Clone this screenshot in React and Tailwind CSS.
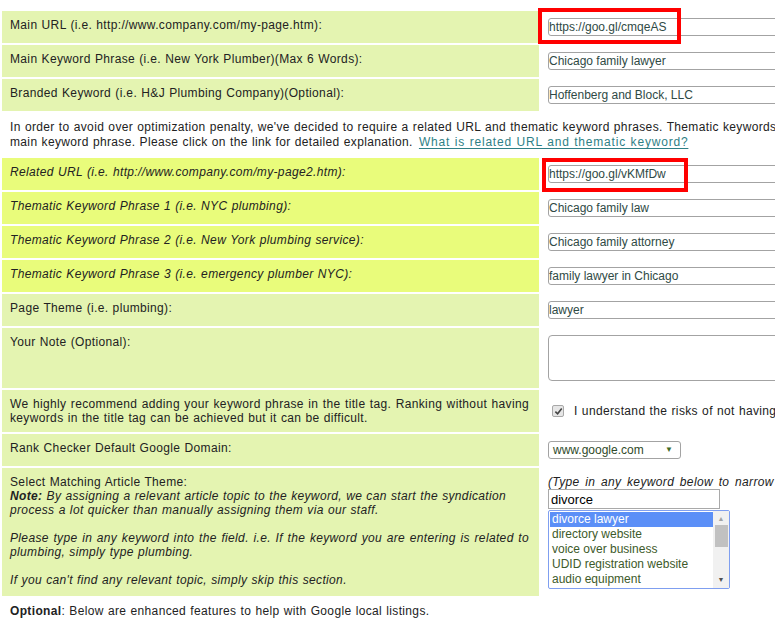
const label = "text-[12px] leading-[14px] tracking-[0.35px] [word-spacing:0.5px] text-[#222]"
const inputCls =
  "h-[18px] w-[262px] rounded-[3px] border border-[#a3a3a3] bg-white px-0 text-[12px] leading-[16px] text-[#2f4a45] outline-none"

function Row({ tone = "light", left, right, italic = false }) {
  const bg = tone === "yellow" ? "bg-[#e9fc7b]" : "bg-[#e4f4b1]"
  return (
    <div className="flex">
      <div className={`w-[537px] shrink-0 ${bg} pl-[8px] pr-[10px] py-[7px] ${label} ${italic ? "italic" : ""}`}>{left}</div>
      <div className="flex flex-1 items-center pl-[9px] py-[7px] text-[12px] leading-[14px]">{right}</div>
    </div>
  )
}

function TextInput({ value }) {
  return <input readOnly value={value} className={inputCls} />
}

const topics = [
  "divorce lawyer",
  "directory website",
  "voice over business",
  "UDID registration website",
  "audio equipment",
]

export default function App() {
  return (
    <div className="w-[775px] h-[619px] overflow-hidden bg-white font-['Liberation_Sans',Arial,sans-serif]">
      <div className="relative w-[840px] pl-[2px] pt-[11px] flex flex-col gap-[2px]">
        <Row left="Main URL (i.e. http://www.company.com/my-page.htm):" right={<TextInput value="https://goo.gl/cmqeAS" />} />
        <Row left="Main Keyword Phrase (i.e. New York Plumber)(Max 6 Words):" right={<TextInput value="Chicago family lawyer" />} />
        <Row left="Branded Keyword (i.e. H&J Plumbing Company)(Optional):" right={<TextInput value="Hoffenberg and Block, LLC" />} />

        <div className={`${label} pl-[8px] pt-[7px] pb-[6px] leading-[15px] whitespace-nowrap`}>
          <div>
            In order to avoid over optimization penalty, we've decided to require a related URL and thematic keyword phrases. Thematic keywords should be close to your
          </div>
          <div>
            main keyword phrase. Please click on the link for detailed explanation.{" "}
            <a className="ml-[2px] tracking-[0.8px] text-[#2f7f86] underline underline-offset-2">What is related URL and thematic keyword?</a>
          </div>
        </div>

        <Row tone="yellow" italic left="Related URL (i.e. http://www.company.com/my-page2.htm):" right={<TextInput value="https://goo.gl/vKMfDw" />} />
        <Row tone="yellow" italic left="Thematic Keyword Phrase 1 (i.e. NYC plumbing):" right={<TextInput value="Chicago family law" />} />
        <Row tone="yellow" italic left="Thematic Keyword Phrase 2 (i.e. New York plumbing service):" right={<TextInput value="Chicago family attorney" />} />
        <Row tone="yellow" italic left="Thematic Keyword Phrase 3 (i.e. emergency plumber NYC):" right={<TextInput value="family lawyer in Chicago" />} />
        <Row left="Page Theme (i.e. plumbing):" right={<TextInput value="lawyer" />} />
        <Row
          left="Your Note (Optional):"
          right={<textarea readOnly className="h-[46px] w-[262px] resize-none rounded-[4px] border border-[#a3a3a3] bg-white outline-none" />}
        />
        <Row
          left={
            <>
              <div className="text-justify [text-align-last:justify]">
                We highly recommend adding your keyword phrase in the title tag. Ranking without having
              </div>
              <div className="whitespace-nowrap">keywords in the title tag can be achieved but it can be difficult.</div>
            </>
          }
          right={
            <label className={`ml-[4px] flex items-center gap-[10px] ${label} tracking-[0.6px] whitespace-nowrap`}>
              <span className="flex h-[12px] w-[12px] items-center justify-center rounded-[2px] border border-[#a8a8a8] bg-[#e6e6e6]">
                <svg viewBox="0 0 10 10" className="h-[9px] w-[9px]">
                  <path d="M1.5 5.2 L4 7.6 L8.6 1.8" fill="none" stroke="#444" strokeWidth="1.8" />
                </svg>
              </span>
              I understand the risks of not having keywords in the title tag.
            </label>
          }
        />
        <Row
          left="Rank Checker Default Google Domain:"
          right={
            <div className="flex h-[18px] w-[133px] items-center justify-between rounded-[3px] border border-[#a3a3a3] bg-white pl-[4px] pr-[7px] text-[12px] text-[#2f4a2a]">
              <span>www.google.com</span>
              <span className="text-[8px] text-[#3f6b2a]">▼</span>
            </div>
          }
        />
        <Row
          italic
          left={
            <>
              <div className="not-italic whitespace-nowrap">Select Matching Article Theme:</div>
              <div className="whitespace-nowrap">
                <b className="font-bold">Note:</b> By assigning a relevant article topic to the keyword, we can start the syndication
              </div>
              <div className="whitespace-nowrap">process a lot quicker than manually assigning them via our staff.</div>
              <div className="h-[14px]" />
              <div className="text-justify [text-align-last:justify]">
                Please type in any keyword into the field. i.e. If the keyword you are entering is related to
              </div>
              <div className="whitespace-nowrap">plumbing, simply type plumbing.</div>
              <div className="h-[14px]" />
              <div className="whitespace-nowrap">If you can't find any relevant topic, simply skip this section.</div>
            </>
          }
          right={
            <div className="flex flex-col">
              <div className={`${label} tracking-[0.8px] [word-spacing:2px] italic text-[#9a9a9a] whitespace-nowrap`}>(Type in any keyword below to narrow down the list)</div>
              <input readOnly value="divorce" className="h-[20px] w-[172px] border border-[#a9a9a9] bg-white px-[2px] text-[13px] text-black outline-none" />
              <div className="mt-[1px] flex h-[79px] w-[182px] rounded-[2px] border-[1.5px] border-[#7f9ff0] bg-white">
                <div className="flex-1 pt-[1px] pl-[1px]">
                  {topics.map((t, i) => (
                    <div
                      key={t}
                      className={`h-[15px] pl-[2px] text-[12px] leading-[15px] whitespace-nowrap ${i === 0 ? "bg-[#5b8ff7] text-white" : "text-[#3d5a2a]"}`}
                    >
                      {t}
                    </div>
                  ))}
                </div>
                <div className="flex w-[16px] flex-col items-center bg-[#f1f1f1]">
                  <span className="mt-[3px] text-[7px] leading-[10px] text-[#a3a3a3]">▲</span>
                  <div className="mt-[1px] h-[22px] w-[13px] bg-[#c1c1c1]" />
                  <div className="flex-1" />
                  <span className="mb-[3px] text-[7px] leading-[10px] text-[#505050]">▼</span>
                </div>
              </div>
            </div>
          }
        />
        <div className={`${label} pl-[8px] pt-[6px] whitespace-nowrap`}>
          <b className="font-bold">Optional</b>: Below are enhanced features to help with Google local listings.
        </div>

        <div className="absolute left-[538px] top-[8px] h-[36px] w-[143px] border-[4px] border-[#f00]" />
        <div className="absolute left-[542px] top-[158px] h-[34px] w-[146px] border-[4px] border-[#f00]" />
      </div>
    </div>
  )
}
